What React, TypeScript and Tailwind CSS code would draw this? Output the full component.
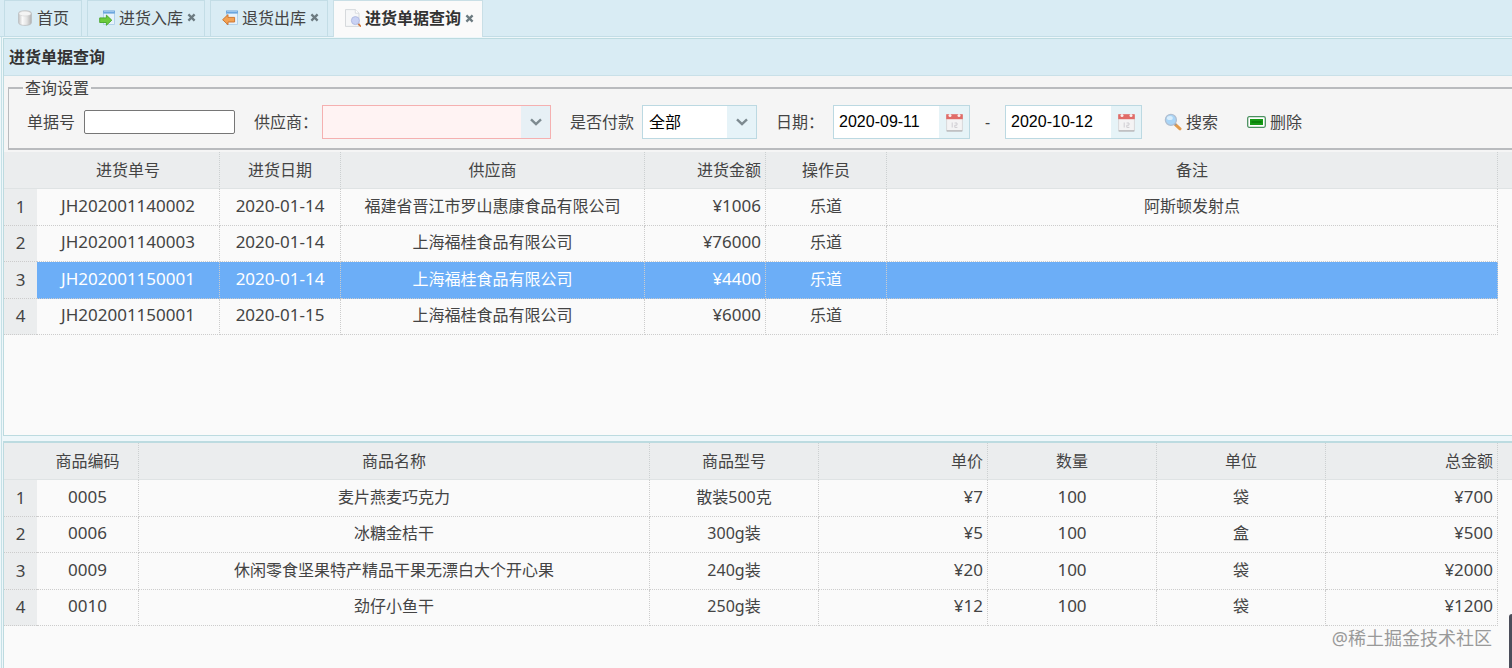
import { useState } from 'react';
import type { ReactNode } from 'react';

type Column = {
  key: string;
  label: string;
  width: string;
  align: string;
  numeric?: boolean;
};

type Row = Record<string, string>;

const ORDER_COLUMNS: Column[] = [
  { key: 'code', label: '进货单号', width: 'w-[183px]', align: 'text-center', numeric: true },
  { key: 'date', label: '进货日期', width: 'w-[121px]', align: 'text-center', numeric: true },
  { key: 'supplier', label: '供应商', width: 'w-[304px]', align: 'text-center' },
  { key: 'amount', label: '进货金额', width: 'w-[121px]', align: 'text-right', numeric: true },
  { key: 'operator', label: '操作员', width: 'w-[121px]', align: 'text-center' },
  { key: 'remark', label: '备注', width: 'w-auto', align: 'text-center' },
];

const ORDERS: Row[] = [
  { code: 'JH202001140002', date: '2020-01-14', supplier: '福建省晋江市罗山惠康食品有限公司', amount: '¥1006', operator: '乐道', remark: '阿斯顿发射点' },
  { code: 'JH202001140003', date: '2020-01-14', supplier: '上海福桂食品有限公司', amount: '¥76000', operator: '乐道', remark: '' },
  { code: 'JH202001150001', date: '2020-01-14', supplier: '上海福桂食品有限公司', amount: '¥4400', operator: '乐道', remark: '' },
  { code: 'JH202001150001', date: '2020-01-15', supplier: '上海福桂食品有限公司', amount: '¥6000', operator: '乐道', remark: '' },
];

const GOODS_COLUMNS: Column[] = [
  { key: 'code', label: '商品编码', width: 'w-[102px]', align: 'text-center', numeric: true },
  { key: 'name', label: '商品名称', width: 'w-auto', align: 'text-center' },
  { key: 'model', label: '商品型号', width: 'w-[169px]', align: 'text-center' },
  { key: 'price', label: '单价', width: 'w-[169px]', align: 'text-right', numeric: true },
  { key: 'num', label: '数量', width: 'w-[169px]', align: 'text-center', numeric: true },
  { key: 'unit', label: '单位', width: 'w-[169px]', align: 'text-center' },
  { key: 'total', label: '总金额', width: 'w-[172px]', align: 'text-right', numeric: true },
];

const GOODS: Row[] = [
  { code: '0005', name: '麦片燕麦巧克力', model: '散装500克', price: '¥7', num: '100', unit: '袋', total: '¥700' },
  { code: '0006', name: '冰糖金桔干', model: '300g装', price: '¥5', num: '100', unit: '盒', total: '¥500' },
  { code: '0009', name: '休闲零食坚果特产精品干果无漂白大个开心果', model: '240g装', price: '¥20', num: '100', unit: '袋', total: '¥2000' },
  { code: '0010', name: '劲仔小鱼干', model: '250g装', price: '¥12', num: '100', unit: '袋', total: '¥1200' },
];

function DatabaseIcon() {
  return (
    <svg className="size-4 shrink-0" viewBox="0 0 16 16">
      <defs>
        <linearGradient id="db" x1="0" x2="1" y1="0" y2="0">
          <stop offset="0" stopColor="#c4c4c4" />
          <stop offset=".3" stopColor="#fafafa" />
          <stop offset=".65" stopColor="#e2e2e2" />
          <stop offset="1" stopColor="#b0b0b0" />
        </linearGradient>
      </defs>
      <path d="M1.6 3.5C1.6 1.7 4.2.8 8 .8s6.4.9 6.4 2.7v9.2c0 1.6-2.6 2.7-6.4 2.7s-6.4-1.1-6.4-2.7z" fill="url(#db)" stroke="#b4b6b7" strokeWidth=".7" />
      <ellipse cx="8" cy="3.6" rx="6" ry="2.4" fill="#f4f4f4" stroke="#cdcdcd" strokeWidth=".5" />
    </svg>
  );
}

function WindowArrowIcon({ out }: { out?: boolean }) {
  return (
    <svg className="size-4 shrink-0" viewBox="0 0 16 16">
      <rect x="4.5" y="1" width="11" height="13.5" fill="#e6f2fb" stroke="#a8cbe8" strokeWidth=".8" />
      <rect x="4.1" y=".6" width="11.8" height="3" fill="#6ba6de" />
      <rect x="5" y="1.2" width="10" height=".8" fill="#a8cdf0" />
      {out ? (
        <path d="M.6 9.7 6 4.6v2.8h6.6v4.6H6v2.8z" fill="#f3a253" stroke="#c9702a" strokeWidth=".9" strokeLinejoin="round" />
      ) : (
        <path d="M12.8 10.2 7.4 5.1v2.8H.7v4.6h6.7v2.8z" fill="#6ccb3c" stroke="#46a52b" strokeWidth=".9" strokeLinejoin="round" />
      )}
    </svg>
  );
}

function PageSearchIcon() {
  return (
    <svg className="h-[18px] w-4 shrink-0" viewBox="0 0 16 18">
      <path d="M.5.6h9.8l3.7 3.6v13.2H.5z" fill="#f6f7f8" stroke="#cdd1d4" strokeWidth=".8" />
      <path d="M10.3.6v3.6H14" fill="#fff" stroke="#cdd1d4" strokeWidth=".7" />
      <path d="m13 14.4 2.3 2.6" stroke="#d2793f" strokeWidth="1.8" strokeLinecap="round" />
      <circle cx="10.4" cy="11.6" r="4" fill="#c9d2f4" stroke="#b2bce2" strokeWidth="1" />
    </svg>
  );
}

function MagnifierIcon() {
  return (
    <svg className="h-[18px] w-[18px] shrink-0" viewBox="0 0 18 18">
      <path d="m11.4 11.6 4.6 4.2" stroke="#e29a4b" strokeWidth="3" strokeLinecap="round" />
      <path d="m10.4 10.4 1.6 1.6" stroke="#8d97a5" strokeWidth="2" />
      <circle cx="6.9" cy="6.9" r="5.5" fill="#a9d5f7" stroke="#b0bfd1" strokeWidth="1.3" />
      <ellipse cx="5.8" cy="5" rx="3" ry="2" fill="#d9eefd" />
    </svg>
  );
}

function RemoveIcon() {
  return (
    <svg className="h-3 w-[19px] shrink-0" viewBox="0 0 19 12">
      <rect x=".7" y=".7" width="17.6" height="10.6" rx="1.5" fill="#fff" stroke="#4b9160" strokeWidth="1.3" />
      <rect x="3" y="3" width="13" height="6" fill="#159a15" />
      <rect x="4.5" y="5" width="10" height="2" fill="#0a820a" />
    </svg>
  );
}

function CalendarIcon() {
  return (
    <svg className="h-[19px] w-[17px]" viewBox="0 0 17 19">
      <rect x=".6" y="2" width="15.8" height="16" rx="1" fill="#f4f3f4" stroke="#d2d0d2" strokeWidth=".8" />
      <path d="M.6 17.9h15.8" stroke="#b0b0b4" strokeWidth="1.2" />
      <path d="M.2 1.2h16.6v5H.2z" fill="#e06c68" />
      <circle cx="4" cy="2.6" r="1.5" fill="#fbeeee" />
      <circle cx="13" cy="2.6" r="1.5" fill="#fbeeee" />
      <path d="M6.2 9.5v5M8.6 10h2.4v2.2H8.8v2.2h2.6" fill="none" stroke="#cfcdd2" strokeWidth="1" />
    </svg>
  );
}

function CloseIcon() {
  return (
    <svg className="h-[9px] w-[9px]" viewBox="0 0 9 9">
      <path d="m1.4 1.4 6.2 6.2M7.6 1.4 1.4 7.6" stroke="#6c7a80" strokeWidth="2.3" />
    </svg>
  );
}

function Tab({ title, icon, active, closable = true, onSelect }: {
  title: string;
  icon: ReactNode;
  active: boolean;
  closable?: boolean;
  onSelect: () => void;
}) {
  return (
    <div className={`flex items-center border border-b-0 pb-[2px] ${active ? 'h-[37px] border-[#c9dfe6] bg-[#fafafa] font-bold text-[#333]' : 'h-9 border-[#c3dde6] bg-[#d9ecf4]'}`}>
      <button type="button" onClick={onSelect} className={`flex h-full items-center gap-1 ${closable ? 'pl-[11px]' : 'px-3'}`}>
        {icon}
        {title}
      </button>
      {closable && (
        <button type="button" aria-label={`关闭${title}`} className="mr-2 ml-1">
          <CloseIcon />
        </button>
      )}
    </div>
  );
}

function Combo({ id, width, invalid, options }: { id: string; width: string; invalid?: boolean; options: string[] }) {
  return (
    <div className={`relative h-[34px] border ${width} ${invalid ? 'border-[#f5b0b0] bg-[#fff3f3]' : 'border-[#bcd9e2] bg-white'}`}>
      <select id={id} className="h-full w-full appearance-none pl-[6px] text-black outline-none">
        {options.map(o => <option key={o}>{o}</option>)}
      </select>
      <span className={`pointer-events-none absolute inset-y-0 right-0 flex w-[29px] items-center justify-center ${invalid ? 'bg-[#e7f0f5]' : 'bg-[#e6f3f8]'}`}>
        <svg className="h-2 w-3" viewBox="0 0 12 8">
          <path d="m1 1.4 5 4.8 5-4.8" fill="none" stroke="#7d8a90" strokeWidth="2.4" />
        </svg>
      </span>
    </div>
  );
}

function DateBox({ label, value }: { label: string; value: string }) {
  return (
    <div className="flex h-[34px] w-[137px] border border-[#bcd9e2] bg-white">
      <input
        type="text"
        aria-label={label}
        defaultValue={value}
        className="min-w-0 flex-1 pl-[5px] font-['Liberation_Sans',sans-serif] text-black outline-none"
      />
      <button type="button" aria-label="选择日期" className="flex w-[30px] items-center justify-center bg-[#e6f3f7]">
        <CalendarIcon />
      </button>
    </div>
  );
}

function DataGrid({ columns, rows, selected, onSelect }: {
  columns: Column[];
  rows: Row[];
  selected?: number;
  onSelect?: (index: number) => void;
}) {
  return (
    <table className="h-[183px] w-full table-fixed border-separate border-spacing-0">
      <thead>
        <tr className="h-[37px] bg-[#ebedee]">
          <th className="w-[33px] border-b border-[#dfe3e4] p-0" />
          {columns.map(c => (
            <th key={c.key} className={`border-r border-b border-r-[#ccd0d1] border-b-[#dfe3e4] px-1 py-0 font-normal [border-right-style:dotted] ${c.width} ${c.align}`}>
              {c.label}
            </th>
          ))}
          <th className="w-[14px] border-b border-[#dfe3e4] p-0" />
        </tr>
      </thead>
      <tbody>
        {rows.map((row, i) => {
          const active = i === selected;
          return (
            <tr key={i} onClick={() => onSelect?.(i)} className={active ? 'text-white' : ''}>
              <td className="border-b border-dotted border-[#ccc] bg-[#ebedee] p-0 text-center text-[17px] text-[#444]">{i + 1}</td>
              {columns.map(c => (
                <td
                  key={c.key}
                  className={`border-r border-b border-dotted border-[#ccc] px-1 pt-0 pb-[2px] ${c.align} ${c.numeric ? 'text-[17px]' : ''} ${active ? 'bg-[#6caef7]' : ''}`}
                >
                  {row[c.key]}
                </td>
              ))}
              <td className="p-0" />
            </tr>
          );
        })}
      </tbody>
    </table>
  );
}

export default function App() {
  const [tab, setTab] = useState(3);
  const [selected, setSelected] = useState(2);

  const tabs = [
    { title: '首页', icon: <DatabaseIcon />, closable: false },
    { title: '进货入库', icon: <WindowArrowIcon /> },
    { title: '退货出库', icon: <WindowArrowIcon out /> },
    { title: '进货单据查询', icon: <PageSearchIcon /> },
  ];

  return (
    <div className="relative flex min-h-screen flex-col overflow-hidden bg-[#eef7fa] font-['Noto_Sans','Noto_Sans_CJK_SC',sans-serif] text-base leading-6 whitespace-nowrap text-[#444]">
      {/* Tabs */}
      <div className="flex h-[37px] items-start gap-[5px] border-b border-[#c3dde6] bg-[#d9ecf4] pl-1">
        {tabs.map((t, i) => (
          <Tab key={t.title} {...t} active={i === tab} onSelect={() => setTab(i)} />
        ))}
      </div>

      <main className="ml-px flex flex-1 flex-col border-l border-[#c6e0e6] pl-px">
        {/* Orders */}
        <section className="mt-px flex h-[398px] flex-col border border-r-0 border-[#bcdbe0] bg-[#fafafa]">
          <h1 className="h-[37px] shrink-0 border-b border-[#c9e0e8] bg-[#d9ecf4] pl-[5px] leading-9 font-bold text-[#333]">进货单据查询</h1>
          <form className="shrink-0 bg-[#f5f5f5] pb-[2px] pl-1">
            <fieldset className="h-[74px] border-2 border-r-0 border-l border-[#b9bbbe] pt-[5px] pl-[18px]">
              <legend className="-ml-1 px-[2px] leading-6">查询设置</legend>
              <div className="flex h-[34px] items-center">
                <label htmlFor="code" className="mr-[9px]">单据号</label>
                <input id="code" type="text" className="mr-[19px] h-6 w-[151px] rounded-[2px] border border-[#767676] bg-white px-1 text-black" />
                <label htmlFor="supplier" className="mr-1">供应商：</label>
                <Combo id="supplier" width="w-[229px]" invalid options={['']} />
                <label htmlFor="paid" className="mr-2 ml-[19px]">是否付款</label>
                <Combo id="paid" width="w-[115px]" options={['全部', '已付款', '未付款']} />
                <span className="mr-[9px] ml-[19px]">日期：</span>
                <DateBox label="开始日期" value="2020-09-11" />
                <span className="w-[35px] text-center">-</span>
                <DateBox label="结束日期" value="2020-10-12" />
                <button type="button" className="ml-[22px] flex items-center gap-1">
                  <MagnifierIcon />
                  搜索
                </button>
                <button type="button" className="ml-[29px] flex items-center gap-1">
                  <RemoveIcon />
                  删除
                </button>
              </div>
            </fieldset>
          </form>
          <DataGrid columns={ORDER_COLUMNS} rows={ORDERS} selected={selected} onSelect={setSelected} />
        </section>

        {/* Goods of the selected order */}
        <section className="mt-[5px] flex-1 border-t-2 border-l border-[#bcdbe0] bg-[#fafafa]">
          <DataGrid columns={GOODS_COLUMNS} rows={GOODS} />
        </section>
      </main>

      <p className="absolute right-5 bottom-[18px] text-lg leading-6 text-[#999]">@稀土掘金技术社区</p>
      <div className="absolute right-0 bottom-0 h-[54px] w-[3px] rounded-tl-[3px] bg-[#4b4d5a]" />
    </div>
  );
}
